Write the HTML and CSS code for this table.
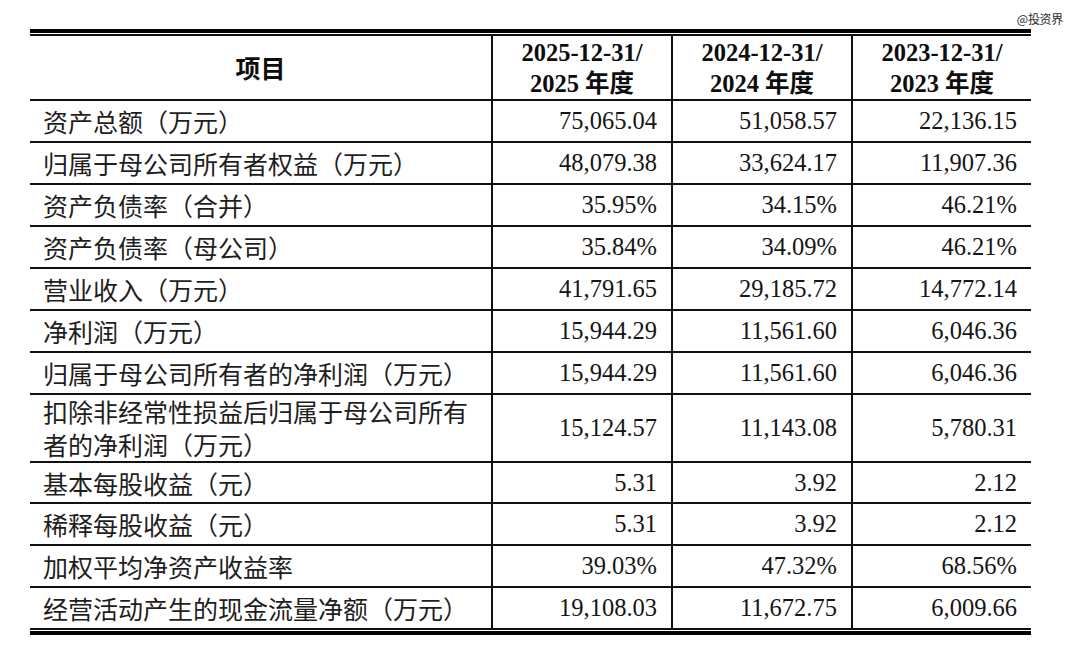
FILE: index.html
```html
<!DOCTYPE html>
<html lang="zh-CN">
<head>
<meta charset="utf-8">
<title>主要财务数据</title>
<link rel="stylesheet" href="styles.css">
</head>
<body>
<div class="page">
  <div class="topbar"><span class="watermark">@投资界</span></div>
  <div class="frame">
    <table class="fin">
      <colgroup>
        <col class="c-item">
        <col class="c-num">
        <col class="c-num">
        <col class="c-num">
      </colgroup>
      <thead>
        <tr class="r-head">
          <th class="hd-item">项目</th>
          <th>2025-12-31/<br>2025 <span class="cjk">年度</span></th>
          <th>2024-12-31/<br>2024 <span class="cjk">年度</span></th>
          <th>2023-12-31/<br>2023 <span class="cjk">年度</span></th>
        </tr>
      </thead>
      <tbody>
        <tr class="r"><td>资产总额（万元）</td><td>75,065.04</td><td>51,058.57</td><td>22,136.15</td></tr>
        <tr class="r"><td>归属于母公司所有者权益（万元）</td><td>48,079.38</td><td>33,624.17</td><td>11,907.36</td></tr>
        <tr class="r"><td>资产负债率（合并）</td><td>35.95%</td><td>34.15%</td><td>46.21%</td></tr>
        <tr class="r"><td>资产负债率（母公司）</td><td>35.84%</td><td>34.09%</td><td>46.21%</td></tr>
        <tr class="r"><td>营业收入（万元）</td><td>41,791.65</td><td>29,185.72</td><td>14,772.14</td></tr>
        <tr class="r"><td>净利润（万元）</td><td>15,944.29</td><td>11,561.60</td><td>6,046.36</td></tr>
        <tr class="r"><td>归属于母公司所有者的净利润（万元）</td><td>15,944.29</td><td>11,561.60</td><td>6,046.36</td></tr>
        <tr class="r-tall"><td class="two">扣除非经常性损益后归属于母公司所有<br>者的净利润（万元）</td><td>15,124.57</td><td>11,143.08</td><td>5,780.31</td></tr>
        <tr class="r-short"><td>基本每股收益（元）</td><td>5.31</td><td>3.92</td><td>2.12</td></tr>
        <tr class="r"><td>稀释每股收益（元）</td><td>5.31</td><td>3.92</td><td>2.12</td></tr>
        <tr class="r"><td>加权平均净资产收益率</td><td>39.03%</td><td>47.32%</td><td>68.56%</td></tr>
        <tr class="r"><td>经营活动产生的现金流量净额（万元）</td><td>19,108.03</td><td>11,672.75</td><td>6,009.66</td></tr>
      </tbody>
    </table>
  </div>
</div>
</body>
</html>
```
FILE: styles.css
```css
* {
  box-sizing: border-box;
}

html, body {
  margin: 0;
  padding: 0;
  background: #ffffff;
}

.page {
  width: 1080px;
  height: 663px;
  overflow: hidden;
}

.topbar {
  height: 29px;
  padding: 12px 17px 0 0;
  text-align: right;
  font-family: "Noto Sans CJK SC", sans-serif;
  font-size: 12px;
  line-height: 14px;
}

.watermark {
  color: #2a2a2a;
  letter-spacing: -0.3px;
}

.frame {
  margin-left: 30px;
  width: 1001px;
  border-top: 4px solid #000;
  border-bottom: 4px solid #000;
  padding: 1px 0;
}

.fin {
  width: 1001px;
  table-layout: fixed;
  border-collapse: separate;
  border-spacing: 0;
  border-top: 2px solid #111;
  font-family: "Liberation Serif", "Noto Sans CJK SC", serif;
  font-size: 24.5px;
  color: #151515;
}

.c-item { width: 461px; }
.c-num { width: 180px; }

.fin th,
.fin td {
  padding: 0 14px 0 15px;
  border-bottom: 2px solid #111;
  vertical-align: middle;
  white-space: nowrap;
}

.fin th + th,
.fin td + td {
  border-left: 2px solid #111;
}

.fin td {
  text-align: right;
  line-height: 30px;
}

.fin td:first-child {
  text-align: left;
  padding-left: 13px;
  font-family: "Noto Sans CJK SC", sans-serif;
  font-size: 25px;
  color: #1e1e1e;
}

.fin th {
  text-align: center;
  font-weight: 700;
  line-height: 29px;
  color: #0d0d0d;
  padding: 0;
}

.fin th .cjk {
  font-family: "Noto Sans CJK SC", sans-serif;
  font-weight: 700;
}

.fin th.hd-item {
  font-family: "Noto Sans CJK SC", sans-serif;
  font-size: 25px;
}

.r-head th { height: 65px; }
.r td { height: 42px; }
.r-tall td { height: 68px; }
.r-short td { height: 41px; }

.fin td.two {
  line-height: 33px;
}
```
